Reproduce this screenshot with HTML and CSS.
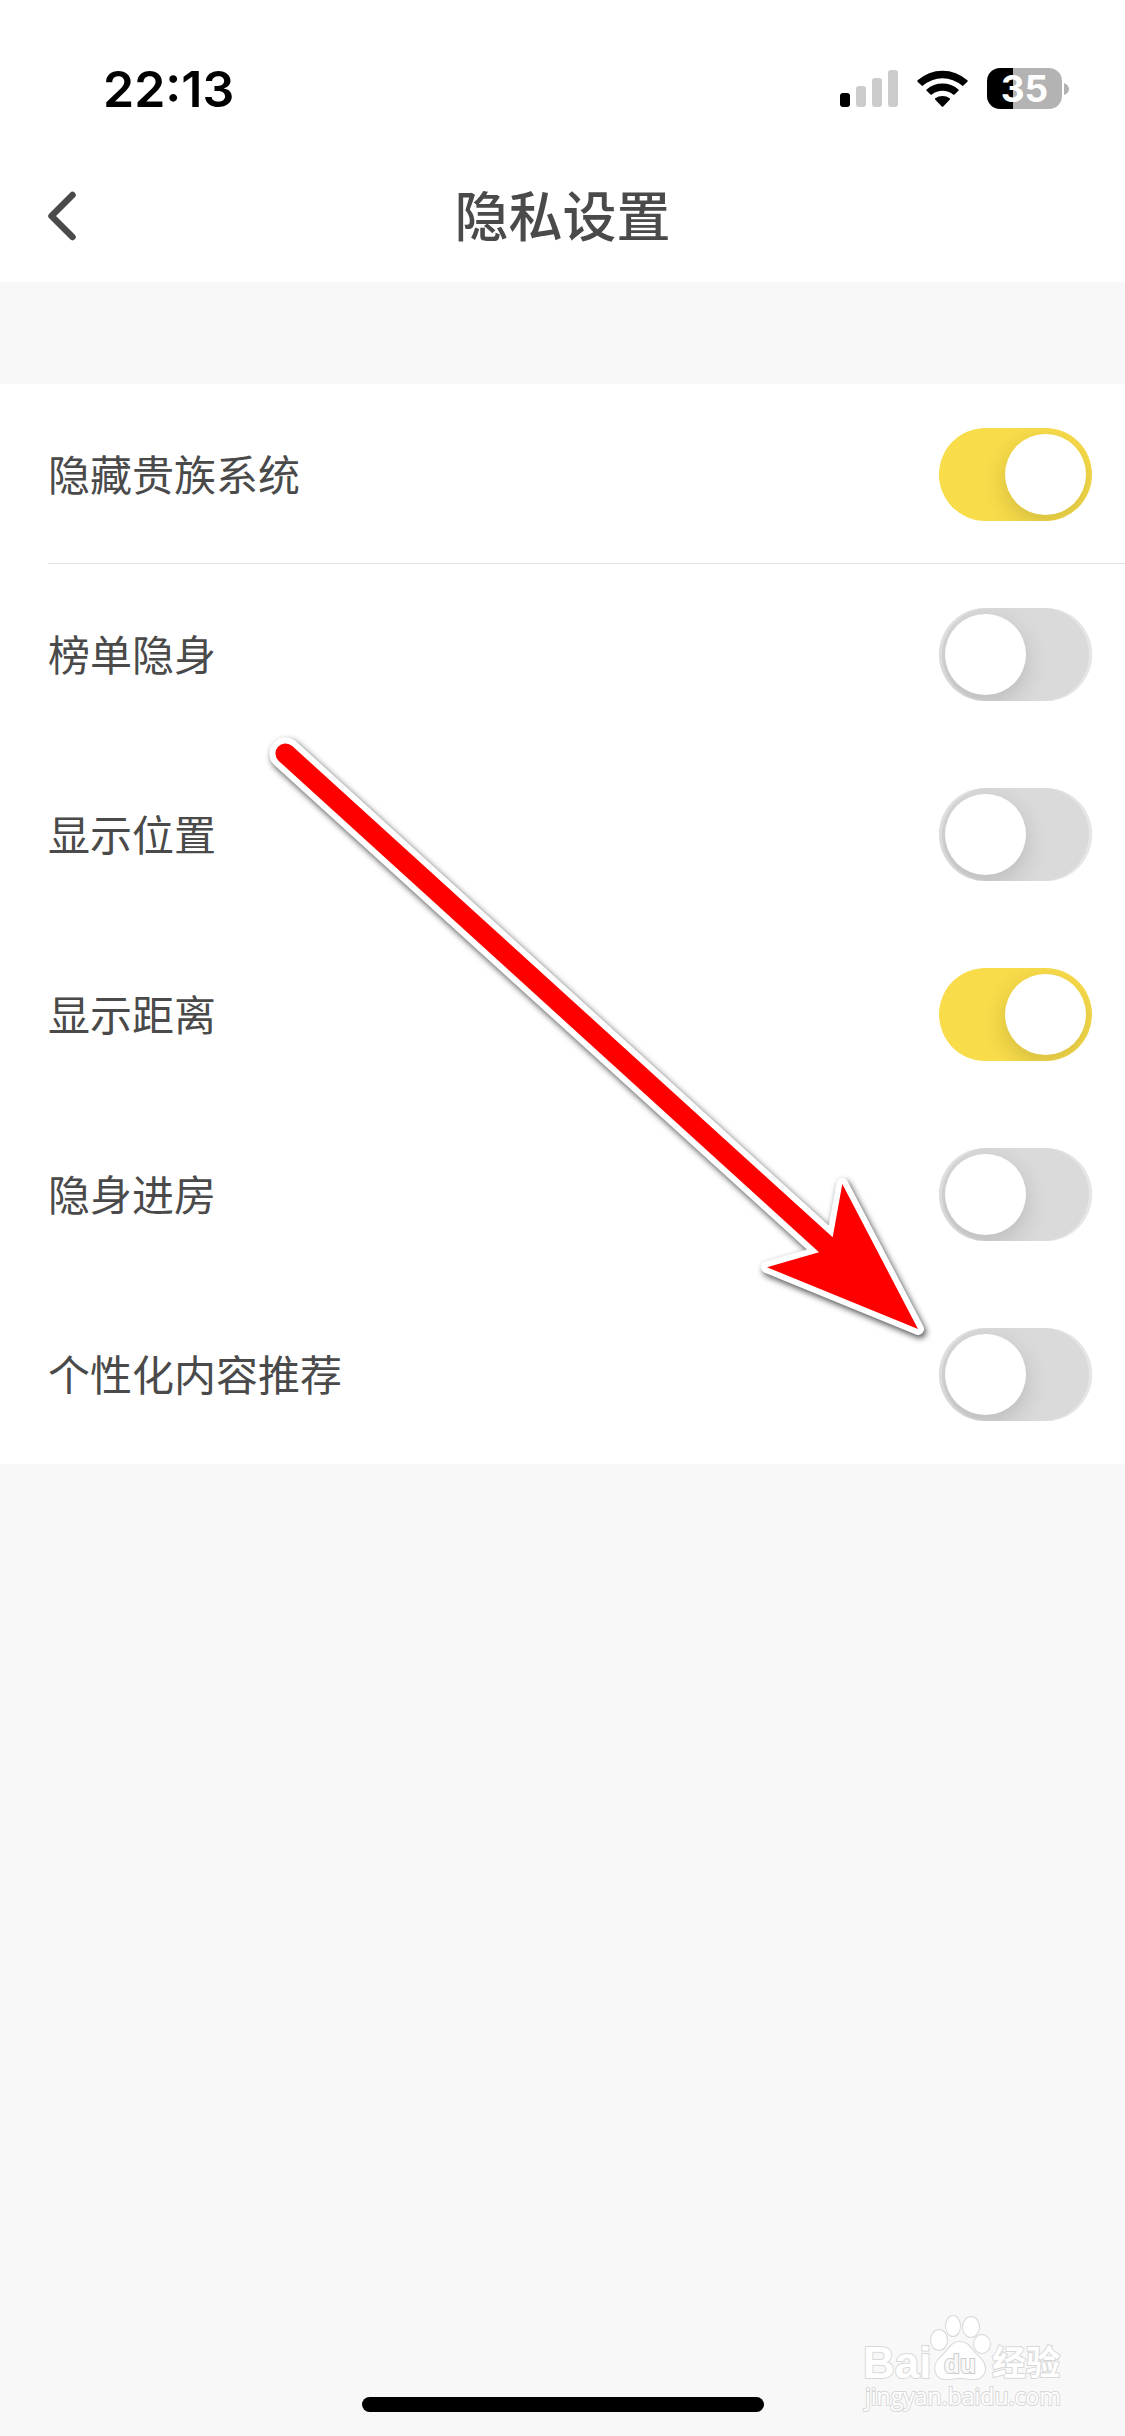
FILE: index.html
```html
<!DOCTYPE html>
<html lang="zh-CN">
<head>
    <meta charset="UTF-8">
    <meta name="viewport" content="width=device-width, initial-scale=1.0">
    <title>隐私设置</title>
    <link rel="stylesheet" href="styles.css">
</head>
<body>
    <header class="header">
        <div class="status-bar">
            <span class="time">22:13</span>
            <div class="status-icons">
                <svg class="signal" width="58" height="37" viewBox="0 0 58 37">
                    <rect x="0" y="23" width="10" height="14" rx="3" fill="#000"/>
                    <rect x="16" y="16" width="10" height="21" rx="3" fill="#ccc"/>
                    <rect x="32" y="8" width="10" height="29" rx="3" fill="#ccc"/>
                    <rect x="48" y="0" width="10" height="37" rx="3" fill="#ccc"/>
                </svg>
                <svg class="wifi" width="51" height="37" viewBox="0 0 51 37">
                    <path d="M0.6 10.3A37 37 0 0 1 50.4 10.3Q51 11 50.4 11.7L46.4 15.6Q45.7 16.2 45 15.6A29.5 29.5 0 0 0 6 15.6Q5.3 16.2 4.6 15.6L0.6 11.7Q0 11 0.6 10.3Z"/>
                    <path d="M9.6 19.4A24.3 24.3 0 0 1 41.4 19.4Q42 20.1 41.4 20.8L37.5 24.5Q36.8 25.1 36.1 24.5A17.3 17.3 0 0 0 14.9 24.5Q14.2 25.1 13.5 24.5L9.6 20.8Q9 20.1 9.6 19.4Z"/>
                    <path d="M18.3 28.3A12 12 0 0 1 32.7 28.3Q33.4 29 32.7 29.7L26.2 36.4Q25.5 37.1 24.8 36.4L18.3 29.7Q17.6 29 18.3 28.3Z"/>
                </svg>
                <div class="battery">
                    <span class="battery-level">35</span>
                    <svg width="5" height="12" viewBox="0 0 5 12"><path d="M0 0Q5 2 5 6Q5 10 0 12Z" fill="#b3b3b3"/></svg>
                </div>
            </div>
        </div>
        <nav class="nav-bar">
            <button class="back" type="button" aria-label="返回">
                <svg width="32" height="50" viewBox="0 0 32 50"><path d="M26.500 4L5.500 25L26.500 46" fill="none" stroke="#4a4a4a" stroke-width="6.500" stroke-linecap="round" stroke-linejoin="round"/></svg>
            </button>
            <h1 class="title">隐私设置</h1>
        </nav>
    </header>

    <main class="settings">
        <div class="row divided">
            <label for="hide-noble">隐藏贵族系统</label>
            <input class="switch" type="checkbox" id="hide-noble" checked>
        </div>
        <div class="row">
            <label for="hide-rank">榜单隐身</label>
            <input class="switch" type="checkbox" id="hide-rank">
        </div>
        <div class="row">
            <label for="show-location">显示位置</label>
            <input class="switch" type="checkbox" id="show-location">
        </div>
        <div class="row">
            <label for="show-distance">显示距离</label>
            <input class="switch" type="checkbox" id="show-distance" checked>
        </div>
        <div class="row">
            <label for="hide-entry">隐身进房</label>
            <input class="switch" type="checkbox" id="hide-entry">
        </div>
        <div class="row">
            <label for="recommend">个性化内容推荐</label>
            <input class="switch" type="checkbox" id="recommend">
        </div>

        <!-- Pointer to the last switch -->
        <svg class="arrow" width="680" height="620" viewBox="260 730 680 620">
            <path d="M292.200 746L832.700 1237.300L842.300 1184L918 1329L767 1267.300L819 1252.300L278.800 761A10 10 0 0 1 292.200 746Z" fill="#f00" stroke="#fff" stroke-width="12" stroke-linejoin="round" paint-order="stroke"/>
        </svg>
    </main>

    <footer class="home">
        <div class="home-indicator"></div>
    </footer>

    <svg class="watermark" width="210" height="106" viewBox="0 0 210 106">
        <g class="mark">
            <text class="mark-bai" x="5" y="64">Bai</text>
            <ellipse cx="81" cy="26" rx="8" ry="10"/>
            <ellipse cx="95" cy="12" rx="7" ry="10"/>
            <ellipse cx="113" cy="13" rx="8" ry="10"/>
            <ellipse cx="124" cy="30" rx="8" ry="9"/>
            <path d="M102 28C111 28 113 36 119 41C127 48 129 55 125 61C120 68 110 64 102 64C94 64 84 68 79 61C75 53 78 47 85 41C91 36 93 28 102 28Z"/>
            <text class="mark-du" x="102" y="59">du</text>
            <text class="mark-cn" x="134" y="61">经验</text>
            <text class="mark-url" x="7" y="91">jingyan.baidu.com</text>
        </g>
    </svg>
</body>
</html>
```
FILE: styles.css
```css
* {
    margin: 0;
    padding: 0;
    box-sizing: border-box;
}

body {
    position: relative;
    display: flex;
    flex-direction: column;
    min-height: 100vh;
    background: #f8f8f8;
    color: #4a4a4a;
    font-family: "Noto Sans CJK SC", sans-serif;
}

/* Header */
.header {
    background: #fff;
}

.status-bar {
    display: flex;
    align-items: flex-start;
    justify-content: space-between;
    height: 150px;
    padding: 28px 56px 0 103px;
}

.time {
    color: #000;
    font: 600 50px/122px Inter, sans-serif;
}

.status-icons {
    display: flex;
    align-items: center;
    gap: 19px;
    height: 121px;
}

.battery {
    display: flex;
    align-items: center;
    gap: 2px;
}

.battery-level {
    width: 75px;
    border-radius: 13px;
    background: linear-gradient(to right, #000 35%, #b3b3b3 35%);
    color: #fff;
    font: 700 37px/41px Inter, sans-serif;
    text-align: center;
}

.nav-bar {
    display: grid;
    grid-template-columns: 120px 1fr 120px;
    align-items: center;
    height: 132px;
}

.back {
    display: flex;
    align-items: center;
    height: 100%;
    padding-left: 46px;
    border: 0;
    background: none;
    cursor: pointer;
}

.title {
    padding-bottom: 4px;
    font-size: 54px;
    font-weight: 500;
    line-height: 80px;
    text-align: center;
}

/* Settings list */
.settings {
    position: relative;
    margin-top: 102px;
    background: #fff;
}

.row {
    display: flex;
    align-items: center;
    justify-content: space-between;
    height: 180px;
    margin-left: 48px;
    padding-right: 33px;
    font-size: 42px;
}

.row label {
    padding-bottom: 4px;
}

.row.divided {
    box-shadow: inset 0 -1px #e3e3e3;
}

.switch {
    flex: none;
    width: 153px;
    height: 93px;
    padding: 6px;
    border-radius: 47px;
    background: #dadada;
    box-shadow: inset 3px 0 #e6e6e6, inset -3px 0 #e6e6e6;
    appearance: none;
    overflow: hidden;
    cursor: pointer;
}

.switch::before {
    content: '';
    display: block;
    width: 81px;
    height: 81px;
    border-radius: 50%;
    background: #fff;
    box-shadow: 0 8px 24px rgba(0, 0, 0, 0.15);
}

.switch:checked {
    background: #f8dc4a;
    box-shadow: none;
}

.switch:checked::before {
    margin-left: auto;
}

.arrow {
    position: absolute;
    top: 346px;
    left: 260px;
    filter: drop-shadow(2px 3px 3px rgba(0, 0, 0, 0.7));
    pointer-events: none;
}

/* Home indicator */
.home {
    display: flex;
    justify-content: center;
    margin-top: auto;
    padding-bottom: 24px;
}

.home-indicator {
    width: 402px;
    height: 15px;
    border-radius: 8px;
    background: #000;
}

/* Watermark */
.watermark {
    position: absolute;
    right: 57px;
    bottom: 16px;
}

.mark {
    fill: #fff;
    stroke: #d8d8d8;
    stroke-width: 2px;
    paint-order: stroke;
}

.mark-bai {
    font: 700 44px "Liberation Sans", sans-serif;
}

.mark-du {
    fill: #f8f8f8;
    stroke: #ccc;
    font: 700 26px "Liberation Sans", sans-serif;
    text-anchor: middle;
}

.mark-cn {
    font: 700 34px "Noto Sans CJK SC", sans-serif;
}

.mark-url {
    font: 400 23px "Open Sans", sans-serif;
}
```
